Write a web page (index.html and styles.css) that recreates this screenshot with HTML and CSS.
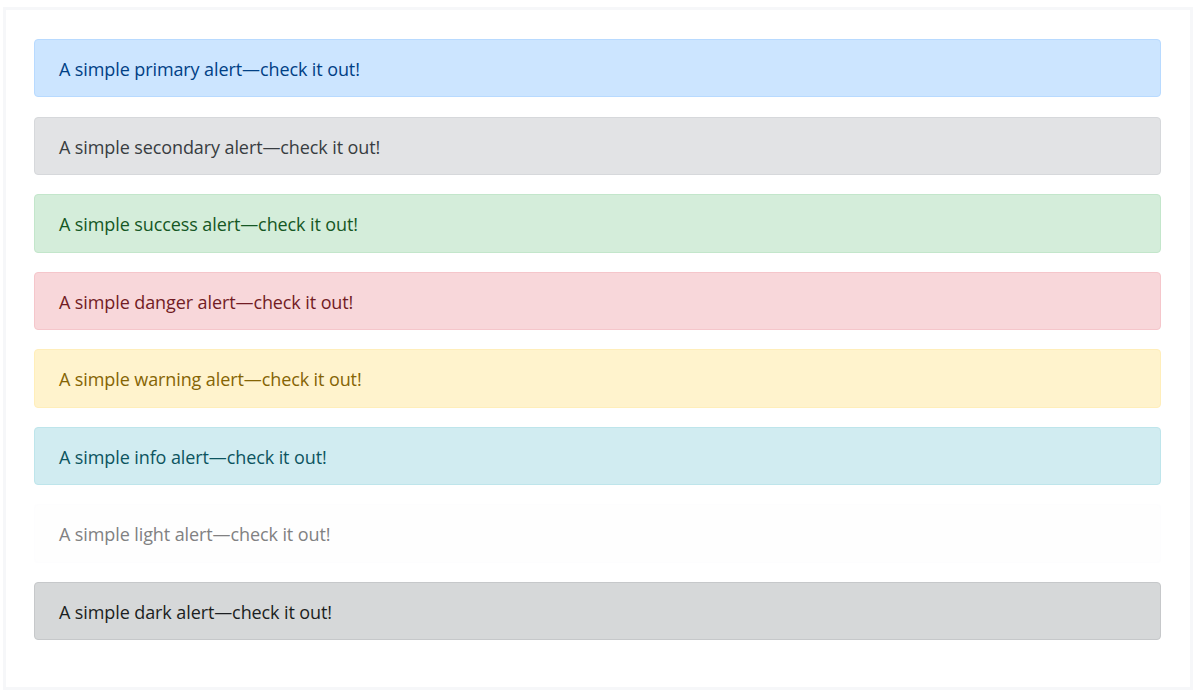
FILE: index.html
```html
<!DOCTYPE html>
<html lang="en">
<head>
<meta charset="utf-8">
<title>Alerts</title>
<link rel="stylesheet" href="styles.css">
</head>
<body>
<div class="frame">
  <div class="alert alert-primary">A simple primary alert—check it out!</div>
  <div class="alert alert-secondary">A simple secondary alert—check it out!</div>
  <div class="alert alert-success">A simple success alert—check it out!</div>
  <div class="alert alert-danger">A simple danger alert—check it out!</div>
  <div class="alert alert-warning">A simple warning alert—check it out!</div>
  <div class="alert alert-info">A simple info alert—check it out!</div>
  <div class="alert alert-light">A simple light alert—check it out!</div>
  <div class="alert alert-dark">A simple dark alert—check it out!</div>
</div>
</body>
</html>
```
FILE: styles.css
```css
html, body {
  margin: 0;
  padding: 0;
  background: #ffffff;
}
body {
  font-family: "Open Sans", "Noto Sans", "Liberation Sans", sans-serif;
  font-size: 18px;
  letter-spacing: -0.1px;
  color: #212529;
}
.frame {
  margin: 7px 4px 0 3px;
  height: 683px;
  box-sizing: border-box;
  border: 3px solid #f6f7f9;
  padding: 29px 29px 0 28px;
  background: #ffffff;
}
.alert {
  box-sizing: border-box;
  height: 58.4px;
  padding: 15px 24px 13px;
  line-height: 28px;
  border: 1px solid transparent;
  border-radius: 4px;
  margin-bottom: 19.2px;
}
.alert-primary { color: #004085; background: #cce5ff; border-color: #b8daff; }
.alert-secondary { color: #383d41; background: #e2e3e5; border-color: #d6d8db; }
.alert-success { color: #155724; background: #d4edda; border-color: #c3e6cb; }
.alert-danger { color: #721c24; background: #f8d7da; border-color: #f5c6cb; }
.alert-warning { color: #856404; background: #fff3cd; border-color: #ffeeba; }
.alert-info { color: #0c5460; background: #d1ecf1; border-color: #bee5eb; }
.alert-light { color: #818182; background: #fefefe; border-color: #fdfdfe; }
.alert-dark { color: #1b1e21; background: #d6d8d9; border-color: #c6c8ca; }
```
